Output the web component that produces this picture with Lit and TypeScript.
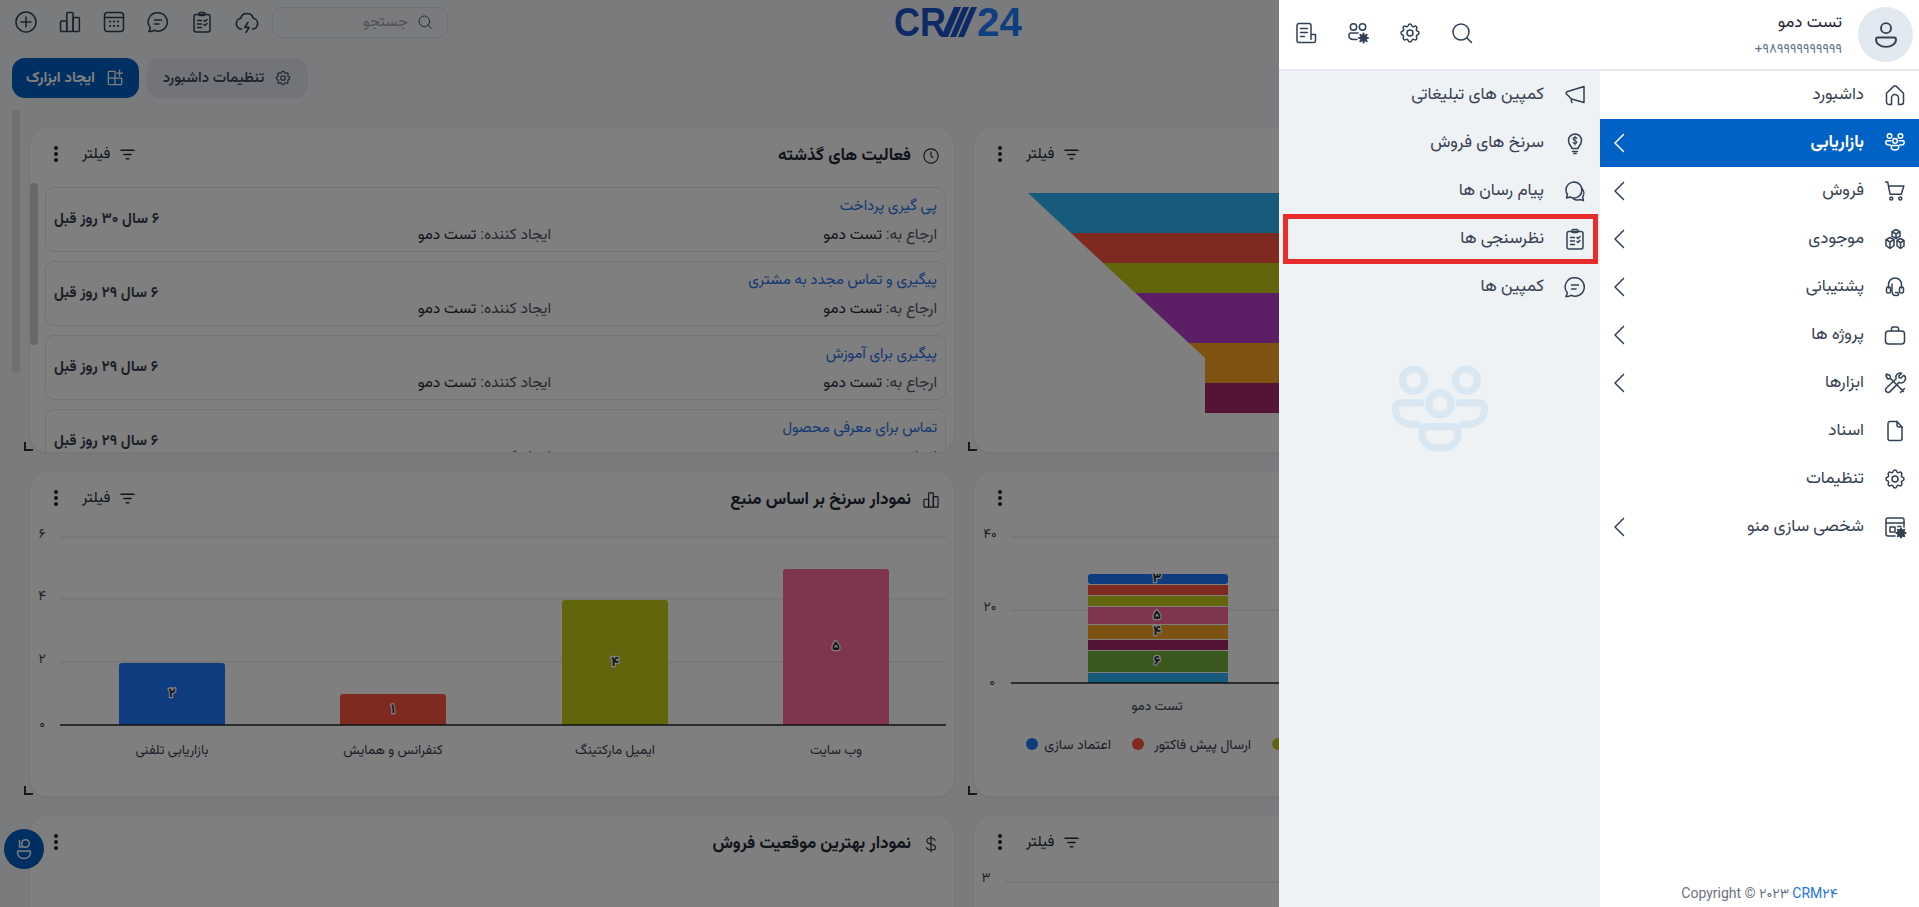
import { LitElement, html, css, svg } from "lit";
import { customElement } from "lit/decorators.js";

const GEAR = svg`<path d="M10.325 4.317c.426-1.756 2.924-1.756 3.35 0a1.724 1.724 0 0 0 2.573 1.066c1.543-.94 3.31.826 2.37 2.37a1.724 1.724 0 0 0 1.065 2.572c1.756.426 1.756 2.924 0 3.35a1.724 1.724 0 0 0-1.066 2.573c.94 1.543-.826 3.31-2.37 2.37a1.724 1.724 0 0 0-2.572 1.065c-.426 1.756-2.924 1.756-3.35 0a1.724 1.724 0 0 0-2.573-1.066c-1.543.94-3.31-.826-2.37-2.37a1.724 1.724 0 0 0-1.065-2.572c-1.756-.426-1.756-2.924 0-3.35a1.724 1.724 0 0 0 1.066-2.573c-.94-1.543.826-3.31 2.37-2.37 1 .608 2.296.07 2.572-1.065z"/><circle cx="12" cy="12" r="3"/>`;

const ICONS: Record<string, unknown> = {
  home: svg`<path d="M3.500 10.200 10.600 3.400a2 2 0 0 1 2.800 0L20.500 10.200V19a2.500 2.500 0 0 1-2.500 2.500h-2.500V15a3.500 3.500 0 0 0-7 0v6.500H6A2.500 2.500 0 0 1 3.500 19z"/>`,
  group: svg`<circle cx="6.55" cy="5" r="2.3"/><circle cx="17.45" cy="5" r="2.3"/><circle cx="12" cy="9.9" r="2.3"/><path d="M9.3 14.6h5.4a1 1 0 0 1 1 1v.5c0 2-1.5 3-3.7 3s-3.7-1-3.7-3v-.5a1 1 0 0 1 1-1z"/><path d="M8 9.7H3.8a1 1 0 0 0-1 1v.3c0 2 1.4 3.1 3.4 3.1h1.2"/><path d="M16 9.7h4.2a1 1 0 0 1 1 1v.3c0 2-1.4 3.1-3.4 3.1h-1.2"/>`,
  cart: svg`<path d="M2.500 3h2.200l2.400 12.200h11.200L20.800 7H5.600"/><circle cx="8.300" cy="19.500" r="1.500"/><circle cx="17.300" cy="19.500" r="1.500"/>`,
  boxes: svg`<path d="M13 2.500l4 2.200v4.500l-4 2.300-4-2.300V4.700zM13 7v4.500M9 4.700 13 7l4-2.300"/><path d="M7 10.500l4 2.200v6L7 21.500 3 18.700v-6zM7 15v6.500M3 12.700 7 15l4-2.300"/><path d="M17.500 11.500l3.500 2v5.500l-3.500 2.500-3.500-2.500v-5.500zM17.500 15.700V21.500M14 13.500l3.500 2.200 3.500-2.200"/>`,
  headset: svg`<path d="M5.500 13V9.500a6.500 6.500 0 0 1 13 0V13"/><rect x="3.500" y="12" width="4" height="6" rx="1.600"/><rect x="16.500" y="12" width="4" height="6" rx="1.600"/><path d="M9 9v6.500c0 3 1.500 5 3.500 5H14a1.500 1.500 0 0 0 0-3h-1.500"/>`,
  case: svg`<rect x="2.500" y="8" width="19" height="13" rx="3"/><path d="M8.500 8V5.500a1.500 1.500 0 0 1 1.500-1.500h4a1.500 1.500 0 0 1 1.500 1.500V8"/>`,
  tools: svg`<path d="M3.500 3 7 4.500 7.500 7.500 4.800 8 3 5zM7.500 7.500 20.500 20.500M17.500 21.500l4-4"/><path d="M20.800 4.200 18 7l-1.800-.2-.4-1.800 2.800-2.800a4.300 4.300 0 0 0-5.400 5.600L3.400 17a2.500 2.500 0 0 0 3.600 3.600l9.200-9.200a4.300 4.300 0 0 0 4.600-7.200z"/>`,
  file: svg`<path d="M14 2.500H7a2 2 0 0 0-2 2v15a2 2 0 0 0 2 2h10a2 2 0 0 0 2-2V8z"/><path d="M14 2.500V6a2 2 0 0 0 2 2h3"/>`,
  gear: GEAR,
  menucfg: svg`<path d="M12 21H5a2 2 0 0 1-2-2V5a2 2 0 0 1 2-2h14a2 2 0 0 1 2 2v7"/><path d="M3 8h18M7 12h5v5H7zM15 11.500h3"/><circle cx="18" cy="18" r="3.200" fill="currentColor"/><path d="M18 13.400v1.400M18 21.200v1.400M13.400 18h1.400M21.200 18h1.400M14.800 14.800l1 1M20.200 20.200l1 1M14.800 21.200l1-1M20.200 15.800l1-1" stroke-width="2"/>`,
  megaphone: svg`<path d="M21 3.500v16L8.500 16 3.500 11a1.500 1.500 0 0 1 .3-2.200z"/><path d="M8.500 16a3.500 3.500 0 0 0 .5 3.500"/>`,
  bulb: svg`<path d="M9 17.500c0-1.800-3.500-3.500-3.500-8a6.500 6.500 0 0 1 13 0c0 4.500-3.500 6.200-3.500 8z"/><path d="M9.500 20.500h5M10.800 22.500h2.400"/><path d="M14 7.500c-.5-.8-1.200-1.100-2-1.100-1.300 0-2 .7-2 1.500 0 2 4 1.200 4 3.200 0 .8-.8 1.500-2 1.500-.9 0-1.600-.4-2-1.100M12 5v9" stroke-width="1.100"/>`,
  chats: svg`<path d="M11 3a8 8 0 0 0-8 8c0 1.700.5 3.200 1.400 4.500L3.500 19l3.600-1a8 8 0 1 0 3.900-15z"/><path d="M18.800 9.500a6.500 6.500 0 0 1 .8 8.500l.9 3.500-3.600-1a7 7 0 0 1-6.500-.6"/>`,
  survey: svg`<rect x="4" y="4.500" width="16" height="17.500" rx="2"/><path d="M9 4.500V3.800A1.300 1.300 0 0 1 10.300 2.500h3.400A1.300 1.300 0 0 1 15 3.800v.7a1 1 0 0 1-1 1h-4a1 1 0 0 1-1-1z"/><path d="M7.500 10.500h4M7.500 14h4M7.500 17.500h4M14 10.500l1 1 2-2M14 14.500l1 1 2-2"/>`,
  chat: svg`<path d="M12 2.800a9.200 9.200 0 1 1-3.900 17.500c-1.800 1-3.500 1.400-5.300 1.100.9-1 1.400-2.200 1.500-3.600A9.200 9.200 0 0 1 12 2.800z"/><path d="M8.500 10h7M8.500 14h4.500"/>`,
  search: svg`<circle cx="11" cy="11" r="8"/><path d="M17 17 21.500 21.500"/>`,
  usergear: svg`<circle cx="7.500" cy="6" r="3.200"/><circle cx="16.500" cy="6" r="3.200"/><path d="M12 12H5a2 2 0 0 0-2 2v.5C3 17 5 18.500 7.500 18.500H11"/><circle cx="17.500" cy="17" r="2.800" fill="currentColor"/><path d="M17.500 12.500v1.500M17.500 20v1.500M13 17h1.500M20.500 17H22M14.300 13.800l1 1M19.700 19.200l1 1M14.300 20.200l1-1M19.700 14.800l1-1" stroke-width="2"/>`,
  doc: svg`<path d="M17 18.500V4.500a2 2 0 0 0-2-2H5a2 2 0 0 0-2 2v15a2 2 0 0 0 2 2h14.500a2 2 0 0 0 2-2v-6h-4.500"/><path d="M6.500 7.500h7M6.500 11.500h7M6.500 15.500h4"/>`,
  user: svg`<circle cx="12" cy="6.500" r="4"/><path d="M5.500 14h13a1.500 1.500 0 0 1 1.500 1.500c0 3.500-3.500 6-8 6s-8-2.500-8-6A1.500 1.500 0 0 1 5.500 14z"/>`,
  fabuser: svg`<circle cx="13.500" cy="6.500" r="3.800"/><path d="M7.500 3.500v6.500h3"/><path d="M6.500 14h11a1 1 0 0 1 1 1c0 4-2.800 6.500-6.500 6.500S5.500 19 5.500 15a1 1 0 0 1 1-1z"/>`,
  plus: svg`<circle cx="12" cy="12" r="10"/><path d="M12 7v10M7 12h10"/>`,
  bars: svg`<rect x="2.500" y="11" width="6.300" height="10.500" rx="1"/><rect x="8.800" y="2.500" width="6.300" height="19" rx="1"/><rect x="15.100" y="7.500" width="6.300" height="14" rx="1"/>`,
  calendar: svg`<rect x="2.500" y="2.500" width="19" height="19" rx="3"/><path d="M2.500 7.500h19"/><path d="M8 11.500h.1M12 11.500h.1M16 11.500h.1M8 16h.1M12 16h.1M16 16h.1" stroke-width="2.200" stroke-linecap="round"/>`,
  cloud: svg`<path d="M7 18.500a5 5 0 0 1-.8-9.900 6 6 0 0 1 11.600 0A5 5 0 0 1 17 18.500"/><path d="M12.800 12.500 10 17h4l-2.800 4.500"/>`,
  widget: svg`<path d="M12 4H5a1 1 0 0 0-1 1v14a1 1 0 0 0 1 1h14a1 1 0 0 0 1-1v-7H4M12 4v16M17.500 2.500v7M14 6h7"/>`,
  filter: svg`<path d="M3 6h18M7 12h10M10.500 18h3" stroke-width="2.400"/>`,
  clock: svg`<circle cx="12" cy="12" r="9.500"/><path d="M12 6.500V12l2.500 2"/>`,
  dollar: svg`<path d="M17.500 7c-.8-2-2.800-3-5.500-3-3 0-5.500 1.500-5.500 4 0 5.500 11.500 3 11.500 8.500 0 2.500-2.800 3.500-6 3.500-2.800 0-5-1-5.800-3.200M12 1.500v21"/>`,
  chevron: svg`<path d="M15.500 3.500 7 12l8.500 8.500"/>`,
};

function icon(name: string, size = 22) {
  return html`<svg class="ic" width=${size} height=${size} viewBox="0 0 24 24" fill="none" stroke="currentColor" stroke-width="1.5" stroke-linecap="round" stroke-linejoin="round">${ICONS[name]}</svg>`;
}

const MAIN = [
  ["home", "داشبورد", false],
  ["group", "بازاریابی", true],
  ["cart", "فروش", true],
  ["boxes", "موجودی", true],
  ["headset", "پشتیبانی", true],
  ["case", "پروژه ها", true],
  ["tools", "ابزارها", true],
  ["file", "اسناد", false],
  ["gear", "تنظیمات", false],
  ["menucfg", "شخصی سازی منو", true],
] as [string, string, boolean][];

const SUB = [
  ["megaphone", "کمپین های تبلیغاتی"],
  ["bulb", "سرنخ های فروش"],
  ["chats", "پیام رسان ها"],
  ["survey", "نظرسنجی ها"],
  ["chat", "کمپین ها"],
];

const ACTIVITIES = [
  ["پی گیری پرداخت", "۶ سال ۳۰ روز قبل"],
  ["پیگیری و تماس مجدد به مشتری", "۶ سال ۲۹ روز قبل"],
  ["پیگیری برای آموزش", "۶ سال ۲۹ روز قبل"],
  ["تماس برای معرفی محصول", "۶ سال ۲۹ روز قبل"],
];

const C = { blue: "#2db4f8", red: "#fe5440", olive: "#c6ca1a", purple: "#b83cc8", orange: "#fca420", maroon: "#a82870", pink: "#ff6a98", green: "#74b03c", royal: "#1e78ff" };

const SRC = [
  { x: 89, w: 106, h: 62, c: C.royal, v: "۲", l: "بازاریابی تلفنی" },
  { x: 310, w: 106, h: 31, c: C.red, v: "۱", l: "کنفرانس و همایش" },
  { x: 532, w: 106, h: 125, c: C.olive, v: "۴", l: "ایمیل مارکتینگ" },
  { x: 753, w: 106, h: 156, c: C.pink, v: "۵", l: "وب سایت" },
];

const STACK = [
  { y: 574, h: 10, c: C.royal, v: "۳" },
  { y: 585, h: 10, c: C.red, v: "" },
  { y: 596, h: 10, c: C.olive, v: "" },
  { y: 607, h: 17, c: C.pink, v: "۵" },
  { y: 625, h: 14, c: C.orange, v: "۴" },
  { y: 640, h: 10, c: C.maroon, v: "" },
  { y: 651, h: 21, c: C.green, v: "۶" },
  { y: 673, h: 10, c: C.blue, v: "" },
];

const FUNNEL = [
  { t: 0, b: 40, c: C.blue },
  { t: 40, b: 70, c: C.red },
  { t: 70, b: 100, c: C.olive },
  { t: 100, b: 150, c: C.purple },
  { t: 150, b: 190, c: C.orange },
  { t: 190, b: 220, c: C.maroon },
];

@customElement("app-root")
export class AppRoot extends LitElement {
  static styles = css`
    :host { display: block; width: 1919px; height: 907px; position: relative; overflow: hidden; background: #f5f7f9; font-family: Roboto, Vazirmatn, "Noto Sans", "DejaVu Sans", sans-serif; color: #1f2937; }
    .ic { display: block; flex: none; }
    .rtl { direction: rtl; white-space: nowrap; }

    .page { display: flex; flex-direction: column; height: 907px; overflow: hidden; }
    .top { flex: none; display: grid; grid-template-columns: 1fr auto 1fr; align-items: center; height: 44px; padding: 0 4px 0 0; color: #334155; }
    .top-l { display: flex; align-items: center; gap: 20px; padding: 0 0 0 14px; }
    .search { margin-left: -8px; width: 176px; height: 31px; box-sizing: border-box; border: 1px solid #dde3f2; border-radius: 10px; display: flex; flex-direction: row-reverse; align-items: center; gap: 9px; padding: 0 14px; font-size: 15px; color: #9ca3af; }
    .search .ic { color: #475569; }
    .logo { display: block; }
    .logo .a { fill: #1c54cc; font: 700 40px "Liberation Sans", sans-serif; }
    .logo .b { fill: #1e7eff; font: 700 40px "Liberation Sans", sans-serif; }
    .logo polygon { fill: #1c54cc; }

    .actions { flex: none; display: flex; gap: 8px; padding: 14px 0 0 12px; }
    .btn { height: 40px; box-sizing: border-box; border-radius: 13px; display: flex; flex-direction: row-reverse; align-items: center; justify-content: center; gap: 10px; font-size: 15px; font-weight: 700; }
    .btn.pri { background: #0060c4; color: #fff; width: 127px; }
    .btn.sec { background: #e4e9f2; color: #334155; width: 161px; font-weight: 500; }

    .grid { flex: none; display: grid; grid-template-columns: 926px 926px; grid-auto-rows: 326px; gap: 18px; padding: 29px 0 0 29px; position: relative; }
    .scroll { position: absolute; left: 12px; top: 12px; width: 8px; height: 263px; border-radius: 4px; background: #dfe1e3; }
    .card { position: relative; background: #fff; border: 1px solid #eceef1; box-sizing: border-box; border-radius: 18px; box-shadow: 0 1px 3px rgba(0,0,0,.05); }
    .clip { overflow: hidden; height: 100%; border-radius: 18px; position: relative; }
    .grip { position: absolute; left: -6px; bottom: 1px; width: 9px; height: 9px; border-left: 2px solid #333; border-bottom: 2px solid #333; box-sizing: border-box; }
    .head { position: relative; display: flex; align-items: center; height: 52px; padding: 0 14px 0 24px; color: #1f2937; }
    .dots { display: flex; flex-direction: column; gap: 2px; }
    .dots i { display: block; width: 4px; height: 4px; border-radius: 50%; background: #1f2937; }
    .fil { display: flex; flex-direction: row-reverse; align-items: center; gap: 9px; margin-left: 24px; font-size: 15px; }
    .title { margin-left: auto; padding-top: 4px; display: flex; flex-direction: row-reverse; align-items: center; gap: 11px; font-size: 17px; font-weight: 700; }

    .list { display: flex; flex-direction: column; gap: 9px; padding: 7px 8px 0 15px; }
    .item { display: flex; align-items: center; height: 65px; box-sizing: border-box; border: 1px solid #e5e7eb; border-radius: 9px; padding: 0 8px; flex: none; }
    .age { font-size: 15px; font-weight: 700; color: #374151; direction: rtl; white-space: nowrap; width: 140px; text-align: left; flex: none; }
    .body { flex: 1; direction: rtl; }
    .ttl { color: #1f6fe5; font-size: 15px; margin-bottom: 6px; white-space: nowrap; }
    .meta { display: grid; grid-template-columns: 386px 1fr; font-size: 15.500px; color: #4b5563; white-space: nowrap; line-height: 20px; }
    .meta b { font-weight: 400; color: #1f2937; }
    .bar { position: absolute; left: 0; top: 55px; width: 8px; height: 162px; border-radius: 4px; background: #cfd1d4; }

    svg.chart { position: absolute; left: 0; top: 0; display: block; }
    svg.chart text { font-family: Roboto, Vazirmatn, "Noto Sans", "DejaVu Sans", sans-serif; font-size: 13.500px; fill: #374151; direction: rtl; text-anchor: middle; }
    svg.chart text.val { font-size: 13px; font-weight: 700; fill: #222; paint-order: stroke; stroke: #fff; stroke-width: 2.500px; }
    svg.chart text.leg { text-anchor: start; font-size: 14px; }

    .shade { position: absolute; inset: 0; background: rgba(0,0,0,.5); }
    .fab { position: absolute; left: 4px; top: 829px; width: 40px; height: 40px; border-radius: 50%; background: #0060c4; color: #fff; display: flex; align-items: center; justify-content: center; }

    .drawer { position: absolute; right: 0; top: 0; width: 640px; height: 907px; background: #fff; display: flex; flex-direction: column; }
    .dh { height: 71px; box-sizing: border-box; border-bottom: 2px solid #e5e9ef; display: flex; align-items: center; padding: 0 6px 0 0; flex: none; color: #334155; }
    .dh-ic { display: flex; align-items: center; gap: 28px; padding: 0 0 4px 15px; }
    .who { margin-left: auto; display: flex; flex-direction: column; align-items: flex-end; gap: 3px; margin-right: 16px; }
    .who b { font-weight: 400; font-size: 17px; color: #1f2937; direction: rtl; }
    .who span { font-size: 13.500px; color: #64748b; direction: ltr; }
    .ava { width: 55px; height: 55px; border-radius: 50%; background: #e2e8f0; display: flex; align-items: center; justify-content: center; color: #334155; }
    .panes { display: flex; flex: 1; min-height: 0; }
    .sub { width: 321px; background: #eef2f5; display: flex; flex-direction: column; align-items: stretch; position: relative; }
    .main { width: 319px; display: flex; flex-direction: column; }
    .row { height: 48px; flex: none; display: flex; flex-direction: row-reverse; align-items: center; font-size: 17px; color: #374151; white-space: nowrap; }
    .main .row { padding: 0 12px 0 8px; }
    .sub .row { padding: 0 13px 0 0; }
    .row .lbl { margin: 0 19px 0 0; direction: rtl; }
    .row .ic { color: #334155; }
    .row .chev { margin-right: auto; color: #334155; }
    .row.on { background: #0062c4; color: #fff; font-weight: 700; }
    .row.on .ic { color: #fff; }
    .mark { color: #d8e7f1; align-self: center; margin-top: 45px; }
    .mark svg { display: block; }
    .hl { position: absolute; left: 4px; top: 143px; width: 315px; height: 50px; box-sizing: border-box; border: 5px solid #e82c2c; }
    .copy { margin-top: auto; padding-bottom: 1px; text-align: center; font-size: 14px; color: #6b7280; direction: ltr; }
    .copy a { color: #1d73f0; text-decoration: none; }
  `;

  private dots() { return html`<div class="dots"><i></i><i></i><i></i></div>`; }
  private fil() { return html`<div class="fil">${icon("filter", 17)}<span>فیلتر</span></div>`; }

  private funnel() {
    const x = (y: number) => (y >= 165 ? 177 : (y / 165) * 177);
    const polys = FUNNEL.map((f) => {
      const pts = [[x(f.t), f.t], [900 - x(f.t), f.t]] as number[][];
      if (f.t < 165 && f.b > 165) pts.push([723, 165]);
      pts.push([900 - x(f.b), f.b], [x(f.b), f.b]);
      if (f.t < 165 && f.b > 165) pts.push([177, 165]);
      return svg`<polygon points=${pts.map((p) => p.join(",")).join(" ")} fill=${f.c}></polygon>`;
    });
    return html`<svg class="chart" width="924" height="324"><g transform="translate(54,65)">${polys}</g></svg>`;
  }

  private srcChart() {
    return html`<svg class="chart" width="924" height="324">
      ${[[65, "۶"], [127, "۴"], [190, "۲"]].map(([y, t]) => svg`<line x1="30" x2="916" y1=${y} y2=${y} stroke="#dfe1e5"></line><text x="12" y=${(y as number) + 1}>${t}</text>`)}
      <text x="12" y="256">۰</text>
      ${SRC.map((b) => svg`<path d="M${b.x} 253v${-b.h + 3}a3 3 0 0 1 3-3h${b.w - 6}a3 3 0 0 1 3 3v${b.h - 3}z" fill=${b.c}></path>
        <text class="val" x=${b.x + b.w / 2} y=${253 - b.h / 2 + 3}>${b.v}</text>
        <text x=${b.x + b.w / 2} y="282">${b.l}</text>`)}
      <line x1="30" x2="916" y1="253" y2="253" stroke="#222" stroke-width="1.500"></line>
    </svg>`;
  }

  private stackChart() {
    return html`<svg class="chart" width="924" height="324">
      ${[[65, "۴۰"], [138, "۲۰"]].map(([y, t]) => svg`<line x1="37" x2="916" y1=${y} y2=${y} stroke="#dfe1e5"></line><text x="16" y=${(y as number) + 1}>${t}</text>`)}
      <text x="18" y="214">۰</text>
      ${STACK.map((s) => svg`<rect x="114" y=${s.y - 472} width="140" height=${s.h} rx=${s.y === 574 ? 3 : 0} fill=${s.c}></rect>${s.v ? svg`<text class="val" x="183" y=${s.y - 472 + s.h / 2 + 3}>${s.v}</text>` : ""}`)}
      <line x1="37" x2="916" y1="211" y2="211" stroke="#222" stroke-width="1.500"></line>
      <text x="183" y="238">تست دمو</text>
      <circle cx="58" cy="272" r="6" fill=${C.royal}></circle><text class="leg" x="137" y="277">اعتماد سازی</text>
      <circle cx="164" cy="272" r="6" fill=${C.red}></circle><text class="leg" x="277" y="277">ارسال پیش فاکتور</text>
      <circle cx="304" cy="272" r="6" fill=${C.olive}></circle>
    </svg>`;
  }

  private tallChart() {
    return html`<svg class="chart" width="924" height="324">
      <line x1="31" x2="916" y1="66" y2="66" stroke="#dfe1e5"></line><text x="12" y="66">۳</text>
    </svg>`;
  }

  render() {
    return html`
      <div class="page">
        <div class="top">
          <div class="top-l">
            ${icon("plus", 24)}${icon("bars", 24)}${icon("calendar", 24)}${icon("chat", 24)}${icon("survey", 24)}${icon("cloud", 26)}
            <div class="search">${icon("search", 16)}<span class="rtl">جستجو</span></div>
          </div>
          <svg class="logo" width="128" height="44" viewBox="0 0 128 44">
            <text class="a" x="0" y="36" textLength="52" lengthAdjust="spacingAndGlyphs">CR</text>
            <polygon points="47,37 60,7 67,7 54,37"></polygon><polygon points="56,37 69,7 75,7 62,37"></polygon><polygon points="64,37 77,7 83,7 70,37"></polygon>
            <text class="b" x="83" y="36" textLength="45" lengthAdjust="spacingAndGlyphs">24</text>
          </svg>
          <div></div>
        </div>
        <div class="actions">
          <div class="btn pri">${icon("widget", 20)}<span class="rtl">ایجاد ابزارک</span></div>
          <div class="btn sec">${icon("gear", 18)}<span class="rtl">تنظیمات داشبورد</span></div>
        </div>
        <div class="grid">
          <div class="scroll"></div>

          <div class="card">
            <div class="clip">
              <div class="head">${this.dots()}${this.fil()}<div class="title">${icon("clock", 18)}<span class="rtl">فعالیت های گذشته</span></div></div>
              <div class="bar"></div>
              <div class="list">
                ${ACTIVITIES.map(([t, a]) => html`<div class="item">
                  <div class="age">${a}</div>
                  <div class="body">
                    <div class="ttl">${t}</div>
                    <div class="meta"><span>ارجاع به: <b>تست دمو</b></span><span>ایجاد کننده: <b>تست دمو</b></span></div>
                  </div>
                </div>`)}
              </div>
            </div>
            <div class="grip"></div>
          </div>

          <div class="card">
            ${this.funnel()}
            <div class="head">${this.dots()}${this.fil()}</div>
            <div class="grip"></div>
          </div>

          <div class="card">
            ${this.srcChart()}
            <div class="head">${this.dots()}${this.fil()}<div class="title">${icon("bars", 18)}<span class="rtl">نمودار سرنخ بر اساس منبع</span></div></div>
            <div class="grip"></div>
          </div>

          <div class="card">
            ${this.stackChart()}
            <div class="head">${this.dots()}</div>
            <div class="grip"></div>
          </div>

          <div class="card">
            <div class="head">${this.dots()}<div class="title">${icon("dollar", 18)}<span class="rtl">نمودار بهترین موقعیت فروش</span></div></div>
          </div>

          <div class="card">
            ${this.tallChart()}
            <div class="head">${this.dots()}${this.fil()}</div>
          </div>
        </div>
      </div>
      <div class="fab">${icon("fabuser", 24)}</div>
      <div class="shade"></div>
      <div class="drawer">
        <div class="dh">
          <div class="dh-ic">${icon("doc", 24)}${icon("usergear", 24)}${icon("gear", 24)}${icon("search", 24)}</div>
          <div class="who"><b>تست دمو</b><span>+۹۸۹۹۹۹۹۹۹۹۹۹</span></div>
          <div class="ava">${icon("user", 30)}</div>
        </div>
        <div class="panes">
          <div class="sub">
            ${SUB.map(([i, t]) => html`<div class="row">${icon(i, 24)}<span class="lbl">${t}</span></div>`)}
            <div class="mark">${icon("group", 116)}</div>
            <div class="hl"></div>
          </div>
          <div class="main">
            ${MAIN.map(([i, t, c], n) => html`<div class="row ${n === 1 ? "on" : ""}">${icon(i, 24)}<span class="lbl">${t}</span>${c ? html`<span class="chev">${icon("chevron", 24)}</span>` : ""}</div>`)}
            <div class="copy">Copyright © ۲۰۲۳ <a>CRM۲۴</a></div>
          </div>
        </div>
      </div>
    `;
  }
}
